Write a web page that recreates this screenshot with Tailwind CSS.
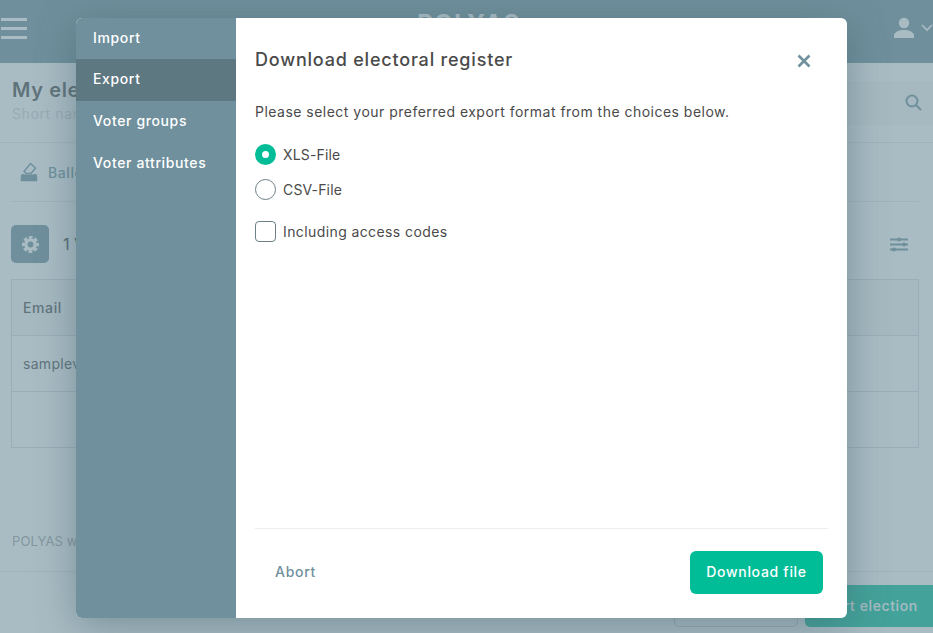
<!DOCTYPE html>
<html lang="en">
<head>
    <meta charset="UTF-8">
    <meta name="viewport" content="width=device-width, initial-scale=1.0">
    <title>Download electoral register</title>
    <script src="https://cdn.jsdelivr.net/npm/@tailwindcss/browser@4"></script>
</head>
<body class="bg-white font-['Inter','Liberation_Sans',sans-serif] overflow-hidden">
    <div class="relative w-[933px] h-[633px] overflow-hidden">

        <!-- Page behind the dialog -->
        <div class="flex flex-col h-full bg-white">
            <header class="h-[63px] bg-[#6f909c] flex items-center pl-[1px] text-white shrink-0">
                <div class="flex flex-col gap-[6px] -mt-[6px] w-[26px] shrink-0">
                    <span class="block w-[26px] h-[3px] bg-white"></span>
                    <span class="block w-[26px] h-[3px] bg-white"></span>
                    <span class="block w-[26px] h-[3px] bg-white"></span>
                </div>
                <div class="flex-1 flex justify-center">
                    <span class="ml-[18px] text-[24px] font-bold tracking-[1.5px] -mt-[15px]">POLYAS</span>
                </div>
                <div class="flex items-center gap-[6px] -mt-[8px] w-[40px] shrink-0">
                    <svg class="w-[22px] h-[22px] shrink-0" viewBox="0 0 22 22" fill="#fff"><circle cx="11" cy="6" r="5.2"/><path d="M1 21v-2.500C1 15 6 13 11 13s10 2 10 5.500V21z"/></svg>
                    <svg class="w-[12px] h-[8px] shrink-0" viewBox="0 0 12 8" fill="none" stroke="#fff" stroke-width="1.600"><path d="M1 1l5 5 5-5"/></svg>
                </div>
            </header>
            <section class="h-[80px] border-b border-[#e8e8e8] flex items-center justify-between pl-[12px] shrink-0">
                <div class="-mt-[3px]">
                    <h1 class="text-[20px] font-semibold text-[#4a4a4a] leading-[26px] tracking-[0.6px] -mt-[2px]">My election</h1>
                    <p class="text-[14px] text-[#d4d4d4] leading-[20px] tracking-[0.6px] mt-[1px]">Short name</p>
                </div>
                <div class="w-[240px] h-[44px] bg-[#f7f7f7] flex items-center justify-end pr-[11px]">
                    <svg class="w-[17px] h-[17px]" viewBox="0 0 17 17" fill="none" stroke="#6f909c" stroke-width="2"><circle cx="7" cy="7" r="5.500"/><path d="M11 11l5 5"/></svg>
                </div>
            </section>
            <section class="ml-[11px] mr-[14px] h-[59px] border-b border-[#e8e8e8] flex items-center gap-[10px] pl-[9px] shrink-0">
                <svg class="w-[18px] h-[20px]" viewBox="0 0 18 20" fill="none" stroke="#6f909c" stroke-width="1.500"><path d="M4 9.500l6.500-8 5 4.500-4.500 5.500H6.500z"/><path d="M1.500 13h3M13.500 13h3"/><path d="M.8 14.500a2 2 0 0 1 2-2h12.400a2 2 0 0 1 2 2v4.700H.8z" fill="#6f909c" stroke="none"/></svg>
                <span class="text-[14px] font-medium text-[#6f909c] tracking-[0.6px]">Ballot</span>
            </section>
            <section class="ml-[11px] mr-[14px] mt-[23px] h-[38px] flex items-center justify-between shrink-0">
                <div class="flex items-center gap-[14px]">
                    <div class="w-[38px] h-[38px] rounded-[5px] bg-[#6f909c] flex items-center justify-center">
                        <svg class="w-[17px] h-[17px]" viewBox="0 0 20 20" fill="none" stroke="#fff"><circle cx="10" cy="10" r="5.500" stroke-width="4"/><circle cx="10" cy="10" r="8.500" stroke-width="3" stroke-dasharray="4.300 2.380" stroke-dashoffset="2.150"/></svg>
                    </div>
                    <span class="text-[16px] font-medium text-[#4a4a4a]">1 Voter</span>
                </div>
                <svg class="w-[20px] h-[15px] mr-[10px]" viewBox="0 0 20 15" stroke="#6f909c" stroke-width="2" fill="#6f909c"><path d="M1 2.500h18M1 7.500h18M1 12.500h18"/><circle cx="10" cy="2.500" r="1"/><circle cx="15" cy="7.500" r="1"/><circle cx="5" cy="12.500" r="1"/></svg>
            </section>
            <div class="ml-[11px] mr-[14px] mt-[16px] border border-[#d5dde0] shrink-0">
                <div class="h-[56px] bg-[#f7f7f7] border-b border-[#d5dde0] flex items-center pl-[11px] text-[14px] font-medium text-[#4a4a4a] tracking-[0.6px]">Email</div>
                <div class="h-[56px] border-b border-[#d5dde0] flex items-center pl-[11px] text-[14px] text-[#4a4a4a] tracking-[0.3px]">samplevoter@polyas.com</div>
                <div class="h-[55px]"></div>
            </div>
            <p class="mt-[85px] pl-[12px] text-[13px] text-[#a3a3a3] leading-[16px] shrink-0 tracking-[0.1px]">POLYAS works best</p>
            <footer class="mt-[22px] border-t border-[#e8e8e8] flex-1 flex justify-end items-start gap-[7px] pt-[13px]">
                <div class="w-[124px] h-[42px] rounded-[5px] border border-[#c9d3d7] bg-white"></div>
                <div class="w-[128px] h-[42px] rounded-l-[5px] bg-[#00bd97] flex items-center justify-center pb-[1px] text-[14px] font-medium text-white tracking-[0.6px]">Start election</div>
            </footer>
        </div>

        <!-- Backdrop -->
        <div class="absolute inset-0 bg-[#6f909c]/60"></div>

        <!-- Dialog -->
        <div class="absolute left-[76px] top-[18px] w-[771px] h-[600px] flex rounded-[6px] overflow-hidden bg-white shadow-[0_8px_40px_rgba(60,90,100,0.45)]">
            <nav class="w-[160px] shrink-0 bg-[#6f909c] text-white text-[14px] font-medium tracking-[0.63px]">
                <a class="flex items-center h-[41px] pl-[17px] pb-[2px]">Import</a>
                <a class="flex items-center h-[42px] pl-[17px] pb-[3px] bg-[#5e7882]">Export</a>
                <a class="flex items-center h-[42px] pl-[17px] pb-[3px]">Voter groups</a>
                <a class="flex items-center h-[42px] pl-[17px] pb-[3px]">Voter attributes</a>
            </nav>
            <main class="flex-1 flex flex-col pl-[19px] pr-[19px] text-[#4a4a4a]">
                <div class="flex items-center justify-between h-[38px] mt-[22px]">
                    <h2 class="text-[18px] font-medium tracking-[0.8px]">Download electoral register</h2>
                    <svg class="w-[14px] h-[14px] mr-[17px] mt-[3px]" viewBox="0 0 14 14" fill="none" stroke="#6f909c" stroke-width="2.600"><path d="M1.500 1.500l11 11M12.500 1.500l-11 11"/></svg>
                </div>
                <p class="mt-[24px] text-[14px] leading-[20px] tracking-[0.48px]">Please select your preferred export format from the choices below.</p>
                <div class="mt-[22px] flex flex-col text-[14px] tracking-[0.35px]">
                    <label class="flex items-center gap-[7px] h-[21px]">
                        <span class="w-[21px] h-[21px] rounded-full bg-[#00bd97] flex items-center justify-center"><span class="w-[7px] h-[7px] rounded-full bg-white"></span></span>
                        <span class="-mt-[1px] tracking-[0.15px]">XLS-File</span>
                    </label>
                    <label class="flex items-center gap-[7px] h-[21px] mt-[14px]">
                        <span class="w-[21px] h-[21px] rounded-full border border-[#6d7f87] bg-white"></span>
                        <span class="-mt-[1px] tracking-[0.15px]">CSV-File</span>
                    </label>
                    <label class="flex items-center gap-[7px] h-[21px] mt-[21px]">
                        <span class="w-[21px] h-[21px] rounded-[4px] border border-[#6d7f87] bg-white"></span>
                        <span class="-mt-[1px] tracking-[0.4px]">Including access codes</span>
                    </label>
                </div>
                <div class="mt-auto border-t border-[#eeeeee] h-[90px] flex items-start justify-between pt-[22px] pr-[5px] pl-[20px]">
                    <button class="h-[43px] pb-[2px] text-[14px] font-medium text-[#6f909c] tracking-[0.7px]">Abort</button>
                    <button class="w-[133px] h-[43px] pb-[2px] rounded-[6px] bg-[#00bd97] text-white text-[14px] font-medium tracking-[0.7px]">Download file</button>
                </div>
            </main>
        </div>
    </div>
</body>
</html>
